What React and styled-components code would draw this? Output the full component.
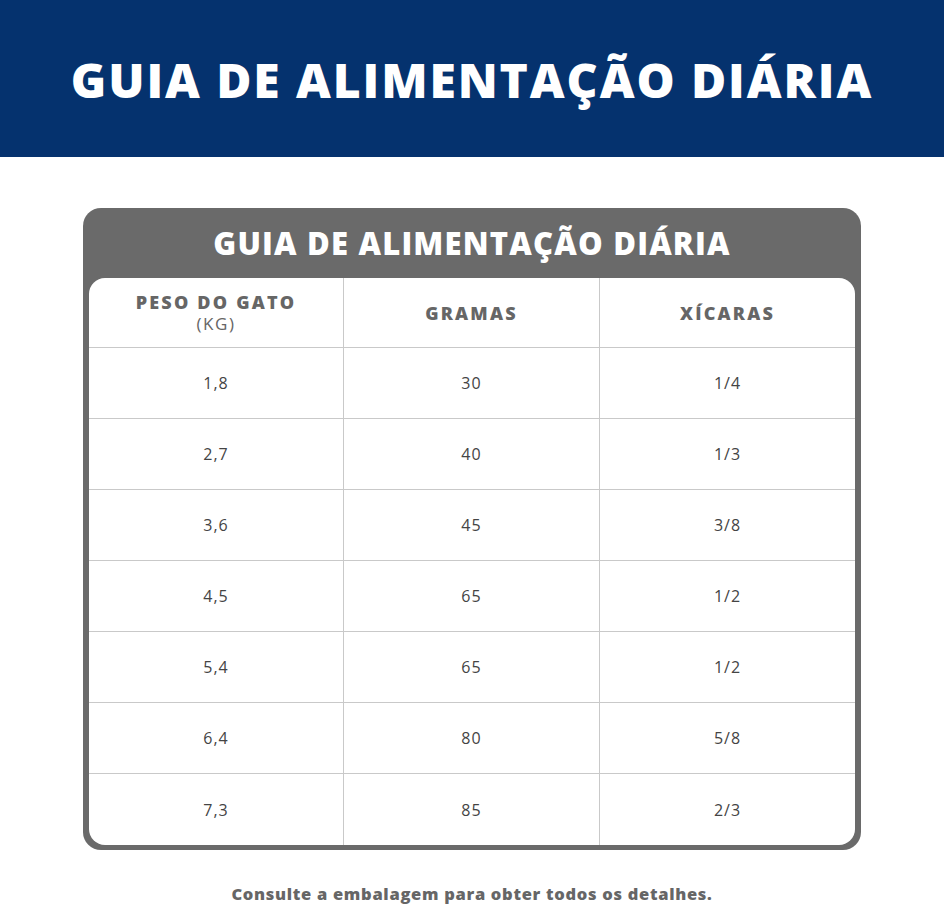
import React from 'react';
import styled, { createGlobalStyle } from 'styled-components';

const GlobalStyle = createGlobalStyle`
  body {
    margin: 0;
    background: #ffffff;
    font-family: "Open Sans", "Liberation Sans", sans-serif;
  }
`;

const rows = [
  ['1,8', '30', '1/4'],
  ['2,7', '40', '1/3'],
  ['3,6', '45', '3/8'],
  ['4,5', '65', '1/2'],
  ['5,4', '65', '1/2'],
  ['6,4', '80', '5/8'],
  ['7,3', '85', '2/3'],
];

const Page = styled.div`
  width: 944px;
  display: flex;
  flex-direction: column;
  align-items: center;
`;

const Banner = styled.header`
  width: 100%;
  height: 157px;
  flex-shrink: 0;
  background: #05326e;
  display: flex;
  align-items: center;
  justify-content: center;
`;

const BannerTitle = styled.h1`
  margin: 0;
  padding-top: 2px;
  color: #ffffff;
  font-family: "Open Sans", sans-serif;
  font-weight: 800;
  font-size: 48px;
  letter-spacing: 1.9px;
`;

const Card = styled.section`
  margin-top: 51px;
  width: 778px;
  flex-shrink: 0;
  background: #6a6a6a;
  border-radius: 18px;
  padding: 0 6px 5px;
  box-sizing: border-box;
`;

const CardTitle = styled.h2`
  margin: 0;
  height: 70px;
  display: flex;
  align-items: center;
  justify-content: center;
  color: #ffffff;
  font-family: "Open Sans", sans-serif;
  font-weight: 800;
  font-size: 31px;
  letter-spacing: 1.2px;
`;

const Table = styled.div`
  background: #ffffff;
  border-radius: 16px;
  overflow: hidden;
  display: grid;
  grid-template-columns: 255px 256px 255px;
`;

const Cell = styled.div`
  height: ${({ $head }) => ($head ? '70px' : '71px')};
  display: flex;
  flex-direction: column;
  align-items: center;
  justify-content: center;
  border-right: ${({ $last }) => ($last ? 'none' : '1px solid #c9c9c9')};
  border-bottom: ${({ $bottom }) => ($bottom ? 'none' : '1px solid #c9c9c9')};
  box-sizing: border-box;
  color: #444444;
  font-size: 16px;
  letter-spacing: 1px;
`;

const HeadLabel = styled.span`
  color: #666666;
  font-weight: 800;
  font-size: 18px;
  line-height: 22px;
  letter-spacing: 2.2px;
`;

const HeadSub = styled.span`
  color: #666666;
  font-size: 17px;
  line-height: 22px;
  letter-spacing: 1.5px;
`;

const Footer = styled.p`
  margin: 32px 0 0;
  color: #666666;
  font-weight: 800;
  font-size: 16.5px;
  letter-spacing: 0.7px;
`;

export default function App() {
  return (
    <Page>
      <GlobalStyle />
      <Banner>
        <BannerTitle>GUIA DE ALIMENTAÇÃO DIÁRIA</BannerTitle>
      </Banner>
      <Card>
        <CardTitle>GUIA DE ALIMENTAÇÃO DIÁRIA</CardTitle>
        <Table>
          <Cell $head>
            <HeadLabel>PESO DO GATO</HeadLabel>
            <HeadSub>(KG)</HeadSub>
          </Cell>
          <Cell $head>
            <HeadLabel>GRAMAS</HeadLabel>
          </Cell>
          <Cell $head $last>
            <HeadLabel>XÍCARAS</HeadLabel>
          </Cell>
          {rows.map((r, i) =>
            r.map((v, j) => (
              <Cell
                key={`${i}-${j}`}
                $last={j === 2}
                $bottom={i === rows.length - 1}
              >
                {v}
              </Cell>
            ))
          )}
        </Table>
      </Card>
      <Footer>Consulte a embalagem para obter todos os detalhes.</Footer>
    </Page>
  );
}
